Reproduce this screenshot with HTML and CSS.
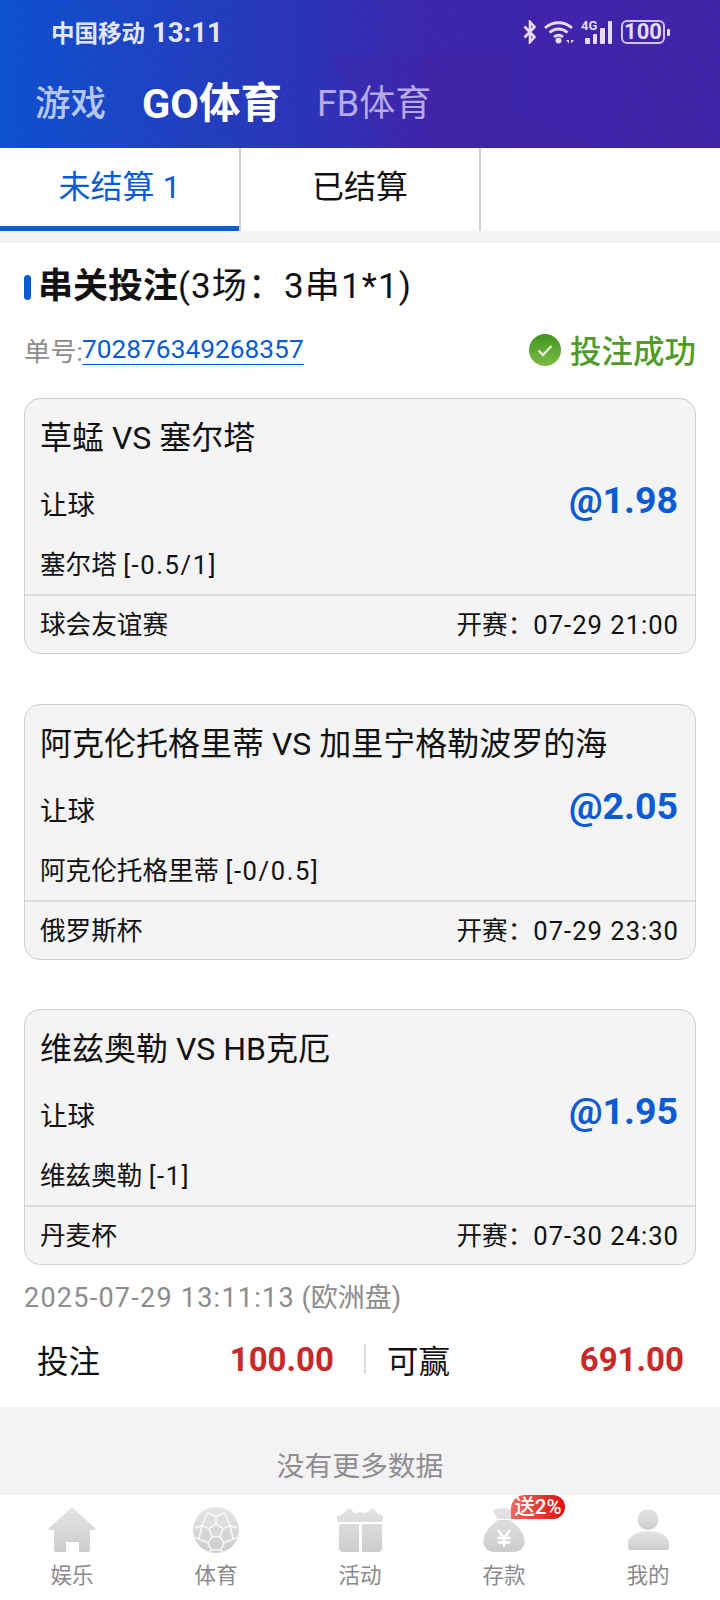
FILE: index.html
```html
<!DOCTYPE html>
<html lang="zh">
<head>
  <meta charset="UTF-8" />
  <title>GO体育 投注记录</title>
  <link rel="stylesheet" href="styles.css">
</head>
<body>
  <!-- 顶部 -->
  <header class="top">
    <div class="status">
      <span class="carrier">中国移动</span>
      <span class="clock">13:11</span>
      <div class="status-icons">
        <svg class="ic-bt" viewBox="0 0 14 24"><path d="M1.500 6.500 11.500 17 7 22V2L11.500 7 1.500 17.500" fill="none" stroke="#e4dcf6" stroke-width="2.600"/></svg>
        <svg class="ic-wifi" viewBox="0 0 30 24"><path d="M1 8C8.500 1 20.500 1 28 8M5.500 12.500C11 7.800 18 7.800 23.500 12.500M10 17C13 14.500 16 14.500 19 17" fill="none" stroke="#e4dcf6" stroke-width="2.800"/><circle cx="14.500" cy="20.500" r="3" fill="#e4dcf6"/><path d="M22 20h3v3.500zM30 20h-3v3.500z" fill="#e4dcf6"/></svg>
        <span class="ic-signal">
          <span class="net">4G</span>
          <i class="b1"></i><i class="b2"></i><i class="b3"></i><i class="b4"></i>
        </span>
        <span class="battery">100</span>
        <span class="battery-tip"></span>
      </div>
    </div>
    <nav class="game-tabs">
      <span class="gt-game">游戏</span>
      <span class="gt-go">GO体育</span>
      <span class="gt-fb">FB体育</span>
    </nav>
  </header>

  <div class="tabs">
    <div class="tab active">未结算 1</div>
    <div class="tab">已结算</div>
    <div class="tab"></div>
  </div>

  <main class="order">
    <h2 class="order-title"><b>串关投注</b>(3场：3串1*1)</h2>

    <div class="order-no">
      <span class="no-label">单号:</span>
      <a class="no-value">702876349268357</a>
      <span class="result">
        <svg class="ic-ok" viewBox="0 0 32 32">
          <defs><linearGradient id="okg" x1="0" y1="0" x2="0" y2="1"><stop offset="0" stop-color="#3f9420"/><stop offset="1" stop-color="#7dbb45"/></linearGradient></defs>
          <circle cx="16" cy="16" r="16" fill="url(#okg)"/>
          <path d="M9.500 16.500 14 21l8.500-9" fill="none" stroke="#e6f3d8" stroke-width="2.400"/>
        </svg>
        投注成功
      </span>
    </div>

    <section class="card">
      <div class="match">草蜢 VS 塞尔塔</div>
      <div class="bet-row"><span>让球</span><span class="odds">@1.98</span></div>
      <div class="pick">塞尔塔 <span class="num">[-0.5/1]</span></div>
      <div class="card-foot"><span>球会友谊赛</span><span>开赛：<span class="num">07-29 21:00</span></span></div>
    </section>

    <section class="card">
      <div class="match">阿克伦托格里蒂 VS 加里宁格勒波罗的海</div>
      <div class="bet-row"><span>让球</span><span class="odds">@2.05</span></div>
      <div class="pick">阿克伦托格里蒂 <span class="num">[-0/0.5]</span></div>
      <div class="card-foot"><span>俄罗斯杯</span><span>开赛：<span class="num">07-29 23:30</span></span></div>
    </section>

    <section class="card">
      <div class="match">维兹奥勒 VS HB克厄</div>
      <div class="bet-row"><span>让球</span><span class="odds">@1.95</span></div>
      <div class="pick">维兹奥勒 <span class="num">[-1]</span></div>
      <div class="card-foot"><span>丹麦杯</span><span>开赛：<span class="num">07-30 24:30</span></span></div>
    </section>

    <div class="order-time"><span class="num">2025-07-29 13:11:13</span> (欧洲盘)</div>

    <div class="totals">
      <div class="total total-left"><span>投注</span><b>100.00</b></div>
      <div class="total total-right"><span>可赢</span><b>691.00</b></div>
    </div>
  </main>

  <div class="no-more">没有更多数据</div>

  <!-- 底部导航 -->
  <footer class="bottom-nav">
    <div class="nav-item">
      <svg class="nav-ic" viewBox="0 0 48 46">
        <defs><linearGradient id="greyg" x1="0" y1="0" x2="0" y2="1"><stop offset="0" stop-color="#e4e4e4"/><stop offset="1" stop-color="#cdcdcd"/></linearGradient></defs>
        <path d="M23 1Q24 0 25 1L47 21Q48.500 23 46 23H42V43Q42 45 40 45H31V35H18V45H8Q6 45 6 43V23H2Q-.5 23 1 21Z" fill="url(#greyg)"/>
      </svg>
      <span>娱乐</span>
    </div>
    <div class="nav-item">
      <svg class="nav-ic" viewBox="0 0 48 46">
        <circle cx="24" cy="23" r="23" fill="url(#greyg)"/>
        <path d="M24 16.500 31 21.500 28 29.500H20L17 21.500ZM15 5 24 9.500 33 5M24 9.500V16.500M31 21.500 38 18.500 33 7M38 18.500 45 21M17 21.500 10 18.500 15 7M10 18.500 3 21M28 29.500 32 36 41 32 38 18.500M41 32 45 30M20 29.500 16 36 7 32 10 18.500M7 32 3 30M32 36 29 43H19L16 36M29 43 31 46M19 43 17 46" fill="none" stroke="#f7f7f7" stroke-width="1.600"/>
      </svg>
      <span>体育</span>
    </div>
    <div class="nav-item">
      <svg class="nav-ic" viewBox="0 0 48 46">
        <path d="M5 8 13 1 19 6 24 5 30 6 37 1 43 8H45Q47 8 47 10V13Q47 15 45 15H3Q1 15 1 13V10Q1 8 3 8ZM3 17H23V45H7Q3 45 3 41ZM26 17H46V41Q46 45 42 45H26Z" fill="url(#greyg)"/>
      </svg>
      <span>活动</span>
    </div>
    <div class="nav-item">
      <svg class="nav-ic" viewBox="0 0 48 46">
        <path d="M13 3Q24-1 35 3 33 9 30 12H18Q15 9 13 3ZM18 13H30C38 18 44.500 27 44.500 34 44.500 42 39 45 33 45H15C9 45 3.500 42 3.500 34 3.500 27 10 18 18 13Z" fill="url(#greyg)"/>
        <path d="M18 23 24 31 30 23M24 31V40M17.500 31H30.500M17.500 35.500H30.500" fill="none" stroke="#fff" stroke-width="2.400"/>
      </svg>
      <span>存款</span>
      <em class="badge">送2%</em>
    </div>
    <div class="nav-item">
      <svg class="nav-ic" viewBox="0 0 48 46">
        <ellipse cx="24" cy="12.500" rx="10.500" ry="10.500" fill="url(#greyg)"/>
        <path d="M4 36C4 29 13 24 24 24S45 29 45 36V41Q45 43 43 43H6Q4 43 4 41Z" fill="url(#greyg)"/>
      </svg>
      <span>我的</span>
    </div>
  </footer>
</body>
</html>
```

FILE: styles.css
```css
/* Estilos básicos */
* {
  box-sizing: border-box;
}

body {
  margin: 0;
  width: 720px;
  font-family: Roboto, "Noto Sans CJK SC", sans-serif;
  color: #111;
  background: #fff;
}

/* cabecera */
.top {
  position: relative;
  height: 148px;
  padding-top: 12px;
  color: #fff;
  background:
    repeating-linear-gradient(100deg, rgba(255, 255, 255, .025) 0 1px, transparent 1px 3px),
    linear-gradient(90deg, #0c50cd 0%, #2a33b8 42%, #3b25aa 60%, #3f22a8 100%);
}

/* banda oscura del fondo */
.top::before {
  content: "";
  position: absolute;
  left: 300px;
  top: 55px;
  width: 300px;
  height: 93px;
  background: rgba(70, 30, 165, .25);
  clip-path: polygon(8% 0, 70% 0, 70% 60%, 100% 100%, 30% 100%);
}

.status,
.game-tabs {
  position: relative;
}

.status {
  height: 40px;
  padding-left: 51px;
  display: flex;
  align-items: center;
  color: #e4e6f8;
}

.carrier {
  font-size: 23.500px;
  font-weight: 700;
}

.clock {
  margin-left: 7px;
  font-size: 27.500px;
  font-weight: 700;
}

.status-icons {
  margin-left: auto;
  margin-right: 50px;
  display: flex;
  align-items: center;
  color: #e4dcf6;
}

.ic-bt {
  width: 14px;
  height: 24px;
}

.ic-wifi {
  margin-left: 7px;
  width: 30px;
  height: 24px;
}

.ic-signal {
  position: relative;
  margin-left: 7px;
  width: 32px;
  height: 24px;
  padding-left: 4px;
  display: flex;
  align-items: flex-end;
  gap: 3px;
}

.ic-signal .net {
  position: absolute;
  left: 0;
  top: -1px;
  font-size: 13px;
  line-height: 13px;
  font-weight: 700;
}

.ic-signal i {
  width: 4.500px;
  background: #e4dcf6;
  border-radius: 1px;
}

.ic-signal .b1 { height: 6px; }
.ic-signal .b2 { height: 10px; }
.ic-signal .b3 { height: 16px; }
.ic-signal .b4 { height: 23px; }

.battery {
  margin-left: 8px;
  width: 44px;
  height: 24px;
  border: 2px solid #cfc4ee;
  border-radius: 6px;
  font-size: 22px;
  line-height: 20px;
  font-weight: 700;
  text-align: center;
}

.battery-tip {
  margin-left: 2px;
  width: 3px;
  height: 7px;
  background: #e4dcf6;
  border-radius: 1px;
}

.game-tabs {
  height: 96px;
  padding: 0 0 0 35px;
  display: flex;
  align-items: center;
  font-size: 35.500px;
}

.gt-game {
  color: #b5c6f0;
  font-weight: 500;
}

.gt-go {
  margin-left: 36px;
  font-size: 41.500px;
  font-weight: 700;
}

.gt-fb {
  margin-left: 35px;
  color: #b6a9e8;
  font-size: 36px;
  font-weight: 400;
}

/* pestañas */
.tabs {
  height: 95px;
  display: flex;
  border-bottom: 12px solid #f3f3f3;
}

.tab {
  width: 240px;
  border-right: 2px solid #cfcfcf;
  font-size: 32px;
  line-height: 78px;
  text-align: center;
}

.tab:first-child {
  width: 241px;
}

.tab:last-child {
  flex: 1;
  border-right: 0;
}

.tab.active {
  color: #0b5bd3;
  background: linear-gradient(#0b5bd3, #0b5bd3) left bottom / 239px 5px no-repeat;
}

/* pedido */
.order {
  height: 1164px;
  padding: 0 24px;
}

.order-title {
  position: relative;
  margin: 0;
  padding: 16px 0 0 14px;
  height: 72px;
  font-size: 35px;
  line-height: 56px;
  font-weight: 400;
  letter-spacing: 1.100px;
}

.order-title::before {
  content: "";
  position: absolute;
  left: 0;
  top: 32px;
  width: 7px;
  height: 25px;
  border-radius: 4px;
  background: #0b5bd3;
}

.order-title b {
  font-size: 35px;
  font-weight: 700;
  letter-spacing: 0;
}

.order-no {
  height: 52px;
  margin-top: 8px;
  display: flex;
  align-items: center;
  font-size: 26.300px;
}

.no-label {
  color: #8c8c8c;
}

.no-value {
  margin-left: -1px;
  color: #0b5bd3;
  line-height: 30px;
  border-bottom: 1px solid #0b5bd3;
}

.result {
  margin-left: auto;
  display: flex;
  align-items: center;
  gap: 9px;
  color: #4f9a2a;
  font-size: 31.500px;
  font-weight: 500;
}

.ic-ok {
  width: 32px;
  height: 32px;
  margin-top: 2px;
}

.card {
  height: 256px;
  margin-top: 49.500px;
  border: 1px solid #cfcfcf;
  border-radius: 16px;
  background: #f4f4f4;
}

.order-no + .card {
  margin-top: 23px;
}

.match {
  height: 77px;
  padding: 0 15px;
  font-size: 32px;
  line-height: 78px;
}

.bet-row {
  height: 60px;
  padding: 0 17px 0 15px;
  display: flex;
  justify-content: space-between;
  font-size: 27.500px;
  line-height: 60px;
}

.odds {
  margin-top: -6px;
  color: #0b5bd3;
  font-size: 37.500px;
  font-weight: 700;
}

.pick {
  height: 58px;
  padding: 0 15px;
  font-size: 25.600px;
  line-height: 58px;
}

.num {
  letter-spacing: 1px;
}

.pick .num {
  letter-spacing: 1.600px;
}

.card-foot {
  height: 59px;
  padding: 0 16px 0 15px;
  display: flex;
  justify-content: space-between;
  border-top: 2px solid #dcdcdc;
  font-size: 25.600px;
  line-height: 58px;
}

.order-time {
  margin-top: 13px;
  color: #8c8c8c;
  font-size: 27px;
  line-height: 40px;
}

.order-time .num {
  letter-spacing: 1.250px;
}

.totals {
  margin-top: 1px;
  height: 80px;
  display: flex;
  align-items: center;
  font-size: 31.500px;
}

.total {
  display: flex;
  justify-content: space-between;
  align-items: center;
}

.total b {
  color: #c62a2a;
  font-size: 33px;
  font-weight: 700;
}

.total-left {
  width: 342px;
  padding: 0 30px 0 13px;
  border-right: 2px solid #dedede;
  height: 30px;
}

.total-right {
  flex: 1;
  padding: 0 12px 0 21px;
}

.no-more {
  height: 88px;
  padding-top: 40px;
  background: #f3f3f3;
  color: #8f8c92;
  font-size: 27.800px;
  line-height: 40px;
  text-align: center;
}

/* navegación inferior */
.bottom-nav {
  height: 105px;
  display: flex;
  background: #fff;
}

.nav-item {
  position: relative;
  width: 144px;
  padding-top: 12px;
  display: flex;
  flex-direction: column;
  align-items: center;
  color: #8a8a8a;
  font-size: 21.500px;
  line-height: 30px;
}

.nav-ic {
  width: 48px;
  height: 46px;
  margin-bottom: 8px;
}

.badge {
  position: absolute;
  left: 79px;
  top: 0;
  width: 54px;
  height: 24px;
  border-radius: 14px 12px 12px 0;
  background: linear-gradient(90deg, #ec6a5e, #e01010);
  color: #fff;
  font-size: 20.500px;
  font-style: normal;
  font-weight: 500;
  line-height: 24px;
  text-align: center;
}
```
